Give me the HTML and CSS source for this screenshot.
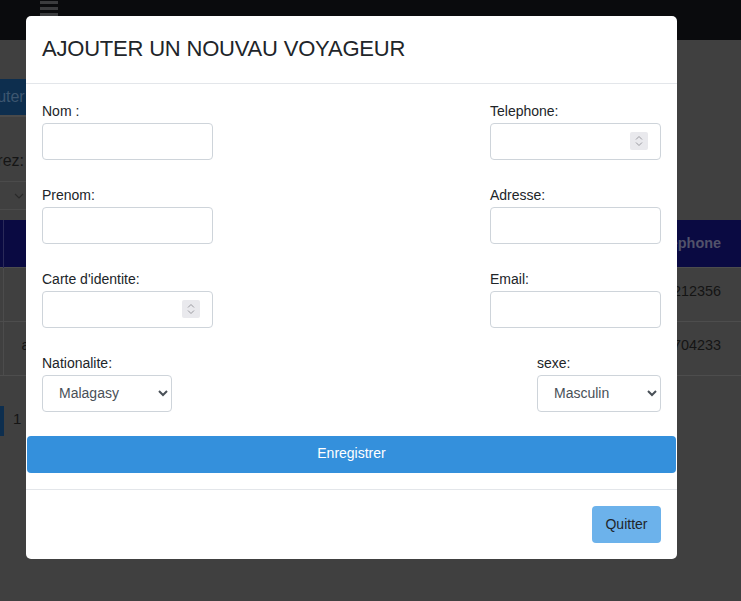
FILE: index.html
```html
<!DOCTYPE html>
<html lang="fr">
<head>
<meta charset="utf-8">
<title>Voyageurs</title>
<link rel="stylesheet" href="styles.css">
</head>
<body>
<div class="page">
  <nav class="navbar">
    <svg class="burger" width="18" height="18" viewBox="0 0 18 18">
      <rect x="0" y="1" width="18" height="3" fill="#3b3c3e"/>
      <rect x="0" y="7" width="18" height="3" fill="#3b3c3e"/>
      <rect x="0" y="13" width="18" height="3" fill="#3b3c3e"/>
    </svg>
  </nav>
  <div class="content">
    <div class="btn-add">Ajouter</div>
    <div class="filter">Filtrez:</div>
    <div class="fake-select">
      <svg width="10" height="6" viewBox="0 0 10 6"><path d="M1 1 L5 5 L9 1" fill="none" stroke="#2a2a2a" stroke-width="1.2"/></svg>
    </div>
    <table class="table">
      <thead>
        <tr><th class="c1"></th><th class="c2"></th><th class="c3">Telephone</th></tr>
      </thead>
      <tbody>
        <tr><td class="c1"></td><td class="c2"></td><td class="c3">0341212356</td></tr>
        <tr><td class="c1"></td><td class="c2">a</td><td class="c3">0320704233</td></tr>
      </tbody>
    </table>
    <div class="pager"><span class="pg-prev"></span><span class="pg-num">1</span></div>
  </div>
</div>

<div class="modal">
  <div class="modal-header">
    <h5 class="modal-title">AJOUTER UN NOUVAU VOYAGEUR</h5>
  </div>
  <form class="modal-form">
    <div class="modal-body">
      <div class="row">
        <div class="group">
          <label>Nom :</label>
          <input class="control w171" type="text">
        </div>
        <div class="group">
          <label>Telephone:</label>
          <div class="num-wrap">
            <input class="control w171" type="text" inputmode="numeric">
            <span class="spin">
              <svg width="18" height="18" viewBox="0 0 18 18">
                <path d="M6 7.5 L9 4.5 L12 7.5" fill="none" stroke="#9a9aa0" stroke-width="1"/>
                <path d="M6 10.5 L9 13.5 L12 10.5" fill="none" stroke="#9a9aa0" stroke-width="1"/>
              </svg>
            </span>
          </div>
        </div>
      </div>
      <div class="row">
        <div class="group">
          <label>Prenom:</label>
          <input class="control w171" type="text">
        </div>
        <div class="group">
          <label>Adresse:</label>
          <input class="control w171" type="text">
        </div>
      </div>
      <div class="row">
        <div class="group">
          <label>Carte d'identite:</label>
          <div class="num-wrap">
            <input class="control w171" type="text" inputmode="numeric">
            <span class="spin">
              <svg width="18" height="18" viewBox="0 0 18 18">
                <path d="M6 7.5 L9 4.5 L12 7.5" fill="none" stroke="#9a9aa0" stroke-width="1"/>
                <path d="M6 10.5 L9 13.5 L12 10.5" fill="none" stroke="#9a9aa0" stroke-width="1"/>
              </svg>
            </span>
          </div>
        </div>
        <div class="group">
          <label>Email:</label>
          <input class="control w171" type="email">
        </div>
      </div>
      <div class="row">
        <div class="group">
          <label>Nationalite:</label>
          <select class="control sel w130"><option>Malagasy</option></select>
        </div>
        <div class="group">
          <label>sexe:</label>
          <select class="control sel w124"><option>Masculin</option></select>
        </div>
      </div>
    </div>
    <button type="button" class="btn-save">Enregistrer</button>
  </form>
  <div class="modal-footer">
    <button type="button" class="btn-quit">Quitter</button>
  </div>
</div>
</body>
</html>
```
FILE: styles.css
```css
* { box-sizing: border-box; }
html, body { margin: 0; padding: 0; }
body {
  background: #404040;
  font-family: "Liberation Sans", Arial, sans-serif;
  font-size: 14px;
  color: #212529;
  overflow: hidden;
  width: 741px;
  height: 601px;
}
.page { width: 741px; }
.navbar {
  height: 40px;
  background: #0a0b0d;
  padding-left: 40px;
}
.burger { display: block; }
.content { overflow: hidden; }
.btn-add {
  margin-top: 39px;
  margin-left: -30px;
  width: 57px;
  height: 38px;
  background: #0d2e4e;
  color: #3d5670;
  font-size: 16px;
  line-height: 36px;
  padding-left: 4px;
  border-bottom: 2px solid #4a4a4a;
}
.filter {
  margin-top: 34px;
  margin-left: -24px;
  font-size: 16px;
  color: #151515;
  line-height: 20px;
}
.fake-select {
  margin-top: 10px;
  margin-left: -10px;
  width: 40px;
  height: 29px;
  border-top: 1px solid #4b4b4b;
  border-bottom: 1px solid #4b4b4b;
  display: flex;
  align-items: center;
  padding-left: 24px;
}
.fake-select svg { display: block; }
.table {
  margin-top: 10px;
  width: 741px;
  border-collapse: collapse;
  font-size: 14.4px;
}
.table th {
  background: #0a0a42;
  color: #52526a;
  height: 47px;
  font-weight: bold;
  padding: 0;
}
.table td {
  height: 54px;
  color: #141414;
  border-top: 1px solid #4d4d4d;
  border-bottom: 1px solid #4d4d4d;
  padding: 12px 0 0;
  vertical-align: top;
  line-height: 23px;
}
.table .c1 { width: 3px; border-right: 1px solid #4c4c4c; }
.table th.c1 { border-right: 1px solid #2a2a58; }
.table .c2 { text-align: left; padding-left: 18px; }
.table .c3 { text-align: right; padding-right: 20px; }
.pager {
  margin-top: 30px;
  display: flex;
  align-items: flex-start;
  gap: 9px;
  height: 30px;
}
.pg-prev { width: 4px; height: 30px; background: #0d2e4e; }
.pg-num { color: #151515; font-size: 15px; line-height: 26px; }

/* modal */
.modal {
  position: fixed;
  left: 26px;
  top: 16px;
  width: 651px;
  background: #fff;
  border-radius: 5px;
}
.modal-header {
  padding: 16px 16px 17px;
  border-bottom: 1px solid #e3e6ea;
}
.modal-title {
  margin: 0;
  font-size: 22px;
  font-weight: normal;
  line-height: 34px;
  color: #212529;
  letter-spacing: -0.2px;
}
.modal-body { padding: 16px 16px 0; }
.row {
  display: flex;
  justify-content: space-between;
  margin-bottom: 24px;
}
.group { display: flex; flex-direction: column; }
.group label {
  line-height: 23px;
  font-size: 14px;
  color: #212529;
}
.control {
  display: block;
  height: 37px;
  border: 1px solid #ced4da;
  border-radius: 4px;
  background: #fff;
  font-family: "Liberation Sans", Arial, sans-serif;
  font-size: 14px;
  color: #495057;
  padding: 5px 12px 7px;
  margin: 0;
}
.num-wrap { position: relative; }
.spin {
  position: absolute;
  right: 13px;
  top: 9px;
  width: 18px;
  height: 18px;
  background: #e9e9ed;
  border-radius: 2px;
}
.spin svg { display: block; }
.w171 { width: 171px; }
.w130 { width: 130px; }
.w124 { width: 124px; }
.sel { padding-left: 12px; }
.btn-save {
  display: block;
  width: 649px;
  height: 37px;
  margin: 0 1px;
  border: 0;
  border-radius: 4px;
  background: #3490dc;
  color: #fff;
  font-family: "Liberation Sans", Arial, sans-serif;
  font-size: 14px;
  padding: 0 0 3px;
}
.modal-form { padding-bottom: 16px; }
.modal-footer {
  border-top: 1px solid #e3e6ea;
  padding: 16px;
  display: flex;
  justify-content: flex-end;
}
.btn-quit {
  height: 37px;
  width: 69px;
  border: 0;
  border-radius: 4px;
  background: #6cb2eb;
  color: #212529;
  font-family: "Liberation Sans", Arial, sans-serif;
  font-size: 14px;
  padding: 0 0 2px;
}
```
